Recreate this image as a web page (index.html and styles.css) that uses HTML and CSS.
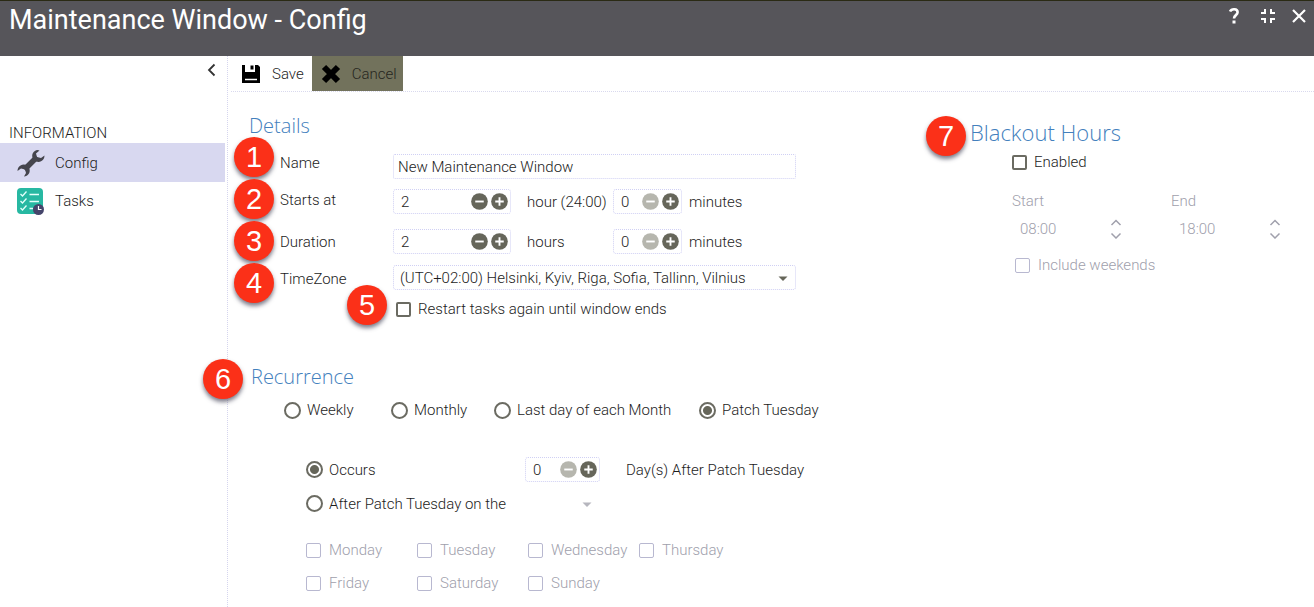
FILE: index.html
```html
<!DOCTYPE html>
<html lang="en">
<head>
<meta charset="utf-8">
<title>Maintenance Window - Config</title>
<link rel="stylesheet" href="styles.css">
</head>
<body>
<svg class="defs" aria-hidden="true">
  <symbol id="minus" viewBox="0 0 18 18"><circle cx="9" cy="9" r="8.8" fill="currentColor"/><path d="M4.5 9h9" stroke="#fff" stroke-width="2"/></symbol>
  <symbol id="plus" viewBox="0 0 18 18"><circle cx="9" cy="9" r="8.8" fill="currentColor"/><path d="M4.5 9h9M9 4.5v9" stroke="#fff" stroke-width="2"/></symbol>
  <symbol id="caret" viewBox="0 0 10 6"><path d="M0.5 0.5h9L5 5z" fill="currentColor"/></symbol>
  <symbol id="updown" viewBox="0 0 12 20"><path d="M1.5 6L6 1.500L10.500 6M1.500 14.500L6 19L10.500 14.500" fill="none" stroke="currentColor" stroke-width="1.500"/></symbol>
</svg>
<header class="titlebar">
  <h1>Maintenance Window - Config</h1>
  <div class="window-actions">
    <button type="button" aria-label="Help"><svg width="12" height="18" viewBox="0 0 12 18"><path d="M2 4.500C3.500 1.300 9.600 1.300 9.600 5.300C9.600 8.300 6 8 6 11.500" fill="none" stroke="#fff" stroke-width="2.600"/><rect x="4.500" y="13.500" width="3" height="3" fill="#fff"/></svg></button>
    <button type="button" aria-label="Restore"><svg width="14" height="14" viewBox="0 0 14 14"><path d="M0 4h4V0M10 0v4H14M0 10h4V14M10 14V10H14" fill="none" stroke="#fff" stroke-width="2"/></svg></button>
    <button type="button" aria-label="Close"><svg width="14" height="14" viewBox="0 0 14 14"><path d="M1 1l12 12M13 1L1 13" stroke="#fff" stroke-width="2.200"/></svg></button>
  </div>
</header>
<div class="body">
  <aside class="sidebar">
    <button class="collapse" type="button" aria-label="Collapse"><svg width="9" height="14" viewBox="0 0 9 14"><path d="M7.500 1.500L2 7l5.500 5.500" fill="none" stroke="#333" stroke-width="1.800"/></svg></button>
    <h2>INFORMATION</h2>
    <nav>
      <a class="active" href="#config">
        <svg width="28" height="28" viewBox="0 0 28 28"><path d="M7.500 20.500L20 8" stroke="#45454d" stroke-width="5.500"/><path d="M20.500 1C16.500 1.500 14.500 5 15.500 8.500C16.500 12.500 21 14 24.500 12C26.500 11 27.500 9 27.500 6.500L24 9L20 8L19 4.500L22.500 1.500ZM7 27.500C11 27.500 13.500 23.500 12.500 20C11.500 16 7 14.500 3.500 16.500C1.500 17.500.500 19.500.500 22L4 19.500L8 20.500L9 24Z" fill="#45454d"/></svg>
        <span>Config</span></a>
      <a href="#tasks">
        <svg width="28" height="28" viewBox="0 0 28 28"><rect y="1" width="26" height="26" rx="4" fill="#27b8a2"/><path d="M3.500 7l2 2L9.500 4.500M3.500 14l2 2L9.500 11.500M3.500 21l2 2L9.500 18.500M12.500 7.500H22M12.500 14.500H22M12.500 21.500H16" fill="none" stroke="#e4fffb" stroke-width="1.300"/><circle cx="21.500" cy="22.500" r="5.500" fill="#45456b"/><path d="M21.500 19v3.500h3" fill="none" stroke="#fff" stroke-width="1.200"/></svg>
        <span>Tasks</span></a>
    </nav>
  </aside>
  <main class="main">
    <div class="toolbar">
      <button class="save" type="button"><svg width="18" height="18" viewBox="0 0 18 18"><path d="M0 0H3V7H13V0H16L18 2V18H0Z" fill="#000"/><path d="M8.500 0.500h3v4h-3z" fill="#000"/><path d="M3 14.500h12" stroke="#fff" stroke-width="1.500"/></svg>Save</button>
      <button class="cancel" type="button"><svg width="20" height="20" viewBox="0 0 20 20"><path d="M3 3l14 14M17 3L3 17" stroke="#000" stroke-width="6"/></svg>Cancel</button>
    </div>
    <form class="content">
      <div class="left">
        <section class="details">
          <h3>Details</h3>
          <div class="badges" aria-hidden="true"><span class="badge">1</span><span class="badge">2</span><span class="badge">3</span><span class="badge">4</span></div>
          <div class="details-grid">
            <div class="labels">
              <label for="name">Name</label>
              <label for="start-hour">Starts at</label>
              <label for="dur-hour">Duration</label>
              <label for="tz">TimeZone</label>
            </div>
            <div class="fields">
              <input class="text" id="name" type="text" value="New Maintenance Window">
              <div class="time-row">
                <div class="stepper"><input id="start-hour" type="text" value="2"><button type="button" aria-label="Decrease"><svg><use href="#minus"/></svg></button><button type="button" aria-label="Increase"><svg><use href="#plus"/></svg></button></div>
                <span class="unit">hour (24:00)</span>
                <div class="stepper"><input aria-label="Start minutes" type="text" value="0"><button type="button" disabled aria-label="Decrease"><svg><use href="#minus"/></svg></button><button type="button" aria-label="Increase"><svg><use href="#plus"/></svg></button></div>
                <span>minutes</span>
              </div>
              <div class="time-row">
                <div class="stepper"><input id="dur-hour" type="text" value="2"><button type="button" aria-label="Decrease"><svg><use href="#minus"/></svg></button><button type="button" aria-label="Increase"><svg><use href="#plus"/></svg></button></div>
                <span class="unit">hours</span>
                <div class="stepper"><input aria-label="Duration minutes" type="text" value="0"><button type="button" disabled aria-label="Decrease"><svg><use href="#minus"/></svg></button><button type="button" aria-label="Increase"><svg><use href="#plus"/></svg></button></div>
                <span>minutes</span>
              </div>
              <div class="select"><select id="tz"><option>(UTC+02:00) Helsinki, Kyiv, Riga, Sofia, Tallinn, Vilnius</option></select><svg class="caret"><use href="#caret"/></svg></div>
              <div class="restart"><span class="badge" aria-hidden="true">5</span><label class="check"><input type="checkbox">Restart tasks again until window ends</label></div>
            </div>
          </div>
        </section>
        <section class="recurrence">
          <span class="badge" aria-hidden="true">6</span>
          <h3>Recurrence</h3>
          <div class="modes">
            <label class="check"><input type="radio" name="mode">Weekly</label>
            <label class="check"><input type="radio" name="mode">Monthly</label>
            <label class="check"><input type="radio" name="mode">Last day of each Month</label>
            <label class="check"><input type="radio" name="mode" checked>Patch Tuesday</label>
          </div>
          <div class="patch">
            <label class="check"><input type="radio" name="patch" checked>Occurs</label>
            <div class="stepper"><input aria-label="Days after" type="text" value="0"><button type="button" disabled aria-label="Decrease"><svg><use href="#minus"/></svg></button><button type="button" aria-label="Increase"><svg><use href="#plus"/></svg></button></div>
            <span>Day(s) After Patch Tuesday</span>
            <label class="check"><input type="radio" name="patch">After Patch Tuesday on the</label>
            <div class="select bare"><select disabled aria-label="Week"></select><svg class="caret"><use href="#caret"/></svg></div>
          </div>
          <div class="days">
            <label class="check off"><input type="checkbox" disabled>Monday</label>
            <label class="check off"><input type="checkbox" disabled>Tuesday</label>
            <label class="check off"><input type="checkbox" disabled>Wednesday</label>
            <label class="check off"><input type="checkbox" disabled>Thursday</label>
            <label class="check off"><input type="checkbox" disabled>Friday</label>
            <label class="check off"><input type="checkbox" disabled>Saturday</label>
            <label class="check off"><input type="checkbox" disabled>Sunday</label>
          </div>
        </section>
      </div>
      <section class="blackout">
        <span class="badge" aria-hidden="true">7</span>
        <h3>Blackout Hours</h3>
        <div class="blackout-body">
          <label class="check"><input type="checkbox">Enabled</label>
          <div class="hours">
            <div class="hour"><label for="bs">Start</label><div><input id="bs" type="text" value="08:00" disabled><svg><use href="#updown"/></svg></div></div>
            <div class="hour"><label for="be">End</label><div><input id="be" type="text" value="18:00" disabled><svg><use href="#updown"/></svg></div></div>
          </div>
          <label class="check off weekends"><input type="checkbox" disabled>Include weekends</label>
        </div>
      </section>
    </form>
  </main>
</div>
</body>
</html>
```
FILE: styles.css
```css
* { box-sizing: border-box; }
body { margin: 0; min-height: 100vh; display: flex; flex-direction: column; background: #fff; color: #1c1c1c; font: 300 15px/20px Roboto, sans-serif; }
button, input, select { font: inherit; color: inherit; }
button { border: 0; padding: 0; background: none; display: flex; align-items: center; }
input, select { margin: 0; }
h1, h2, h3 { margin: 0; font-weight: 400; }
.defs { position: absolute; width: 0; height: 0; }

.titlebar { height: 56px; display: flex; justify-content: space-between; align-items: flex-start; padding: 0 8px 0 9px; background: #56555a; border-top: 1px solid #2a2a14; color: #fff; }
.titlebar h1 { font-size: 27px; line-height: 38px; }
.window-actions { display: flex; align-items: center; height: 30px; gap: 17px; }
.window-actions button:first-child { margin-right: 4px; }

.body { flex: 1; display: flex; }
.sidebar { flex: 0 0 228px; border-right: 1px dotted #d5d5ee; padding-right: 2px; }
.collapse { margin: 7px 9px 0 auto; }
.sidebar h2 { margin-top: 47px; padding-left: 9px; font-size: 15px; font-weight: 300; line-height: 19px; }
.sidebar a { display: flex; align-items: center; gap: 10px; height: 38px; padding-left: 17px; color: inherit; text-decoration: none; }
.sidebar a.active { height: 39px; background: #d8d8f0; }

.main { flex: 1; min-width: 0; }
.toolbar { display: flex; height: 36px; margin-left: 3px; border-bottom: 1px dotted #d9d9ee; }
.save { gap: 12px; padding: 0 8px 0 11px; }
.cancel { gap: 11px; padding: 0 6px 0 9px; background: #72725c; color: #26261e; }

.content { display: flex; padding-top: 20px; }
.left { flex: 1; min-width: 0; padding-left: 21px; }
h3 { font: 300 20px/28px "Open Sans", sans-serif; color: #4380bd; }
.details, .recurrence, .blackout, .restart { position: relative; }
.details-grid { display: grid; grid-template-columns: 113px minmax(0, 403px); padding: 11px 0 0 31px; }
.labels { display: grid; grid-template-rows: 37px 42px 37px 24px; align-content: start; line-height: 24px; }
.fields { display: grid; grid-template-rows: 35px 40px 36px 34px 20px; align-items: start; padding-top: 3px; }
.text { width: 100%; height: 25px; padding: 0 4px; border: 1px dotted #d0d0f4; border-radius: 2px; background: #fff; }
.time-row { display: grid; grid-template-columns: 118px 102px 69px auto; align-items: center; }
.time-row span { padding-left: 7px; white-space: nowrap; }
.time-row .unit { padding-left: 16px; }
.stepper { display: flex; align-items: center; gap: 3px; height: 25px; padding: 0 2px 0 7px; border: 1px dotted #d0d0f4; border-radius: 3px; }
.stepper input { flex: 1; min-width: 0; width: 0; border: 0; padding: 0; background: none; }
.stepper button, .stepper svg { width: 17px; height: 17px; color: #66665a; }
.stepper button:disabled svg { color: #b6b6ae; }
.select { position: relative; height: 25px; border: 1px dotted #d0d0f4; border-radius: 3px; }
.select select { width: 100%; height: 100%; padding: 0 24px 0 6px; border: 0; background: none; appearance: none; opacity: 1; }
.caret { position: absolute; right: 7px; top: 10px; width: 10px; height: 6px; color: #66665a; pointer-events: none; }
.bare { border-color: transparent; }
.bare .caret { color: #b6b6be; }

.check { display: flex; align-items: center; gap: 7px; white-space: nowrap; }
.check input { appearance: none; flex: none; width: 15px; height: 15px; border: 2px solid #6b6b62; border-radius: 2px; background: #fff; }
.check input[type="radio"] { width: 17px; height: 17px; border-radius: 50%; }
.check input:checked { background: radial-gradient(circle, #66665a 4px, #fff 5px); }
.restart { padding-left: 3px; }
.off, .hour { color: #a0a0ac; }
.check.off { gap: 8px; }
.check.off input { border: 1px solid #b8b8d0; }

.recurrence { margin-top: 44px; padding-left: 2px; }
.modes { display: grid; grid-template-columns: 107px 103px 205px auto; padding: 9px 0 0 33px; }
.modes .check { gap: 6px; }
.patch { display: grid; grid-template-columns: 219px 75px auto; row-gap: 9px; align-items: center; padding: 37px 0 0 55px; }
.patch .check { gap: 6px; }
.patch span { padding-left: 26px; white-space: nowrap; }
.days { display: grid; grid-template-columns: repeat(4, 111px); row-gap: 13px; padding: 24px 0 14px 55px; }

.blackout { flex: 0 0 344px; padding-top: 6px; }
.blackout h3 { font-size: 22px; }
.blackout-body { padding: 6px 0 0 42px; }
.hours { display: flex; gap: 54px; margin: 19px 0 16px; }
.hour { width: 105px; }
.hour label { display: block; }
.hour div { display: flex; align-items: center; justify-content: space-between; height: 20px; margin-top: 8px; padding-left: 8px; margin-right: -5px; }
.hour input { width: 50px; padding: 0; border: 0; background: none; }
.hour svg { width: 12px; height: 20px; }
.weekends { padding-left: 3px; }

.badge { width: 40px; height: 40px; border-radius: 50%; background: #fb3018; color: #fff; font: 29px/40px "Liberation Sans", sans-serif; text-align: center; box-shadow: 0 3px 4px rgba(70, 70, 90, .7); }
.badges { position: absolute; left: -15px; top: 25px; display: grid; gap: 2px; z-index: 1; }
.restart .badge { position: absolute; left: -46px; top: -14px; }
.recurrence .badge { position: absolute; left: -46px; top: -4px; }
.blackout .badge { position: absolute; left: -44px; top: 4px; }
```
